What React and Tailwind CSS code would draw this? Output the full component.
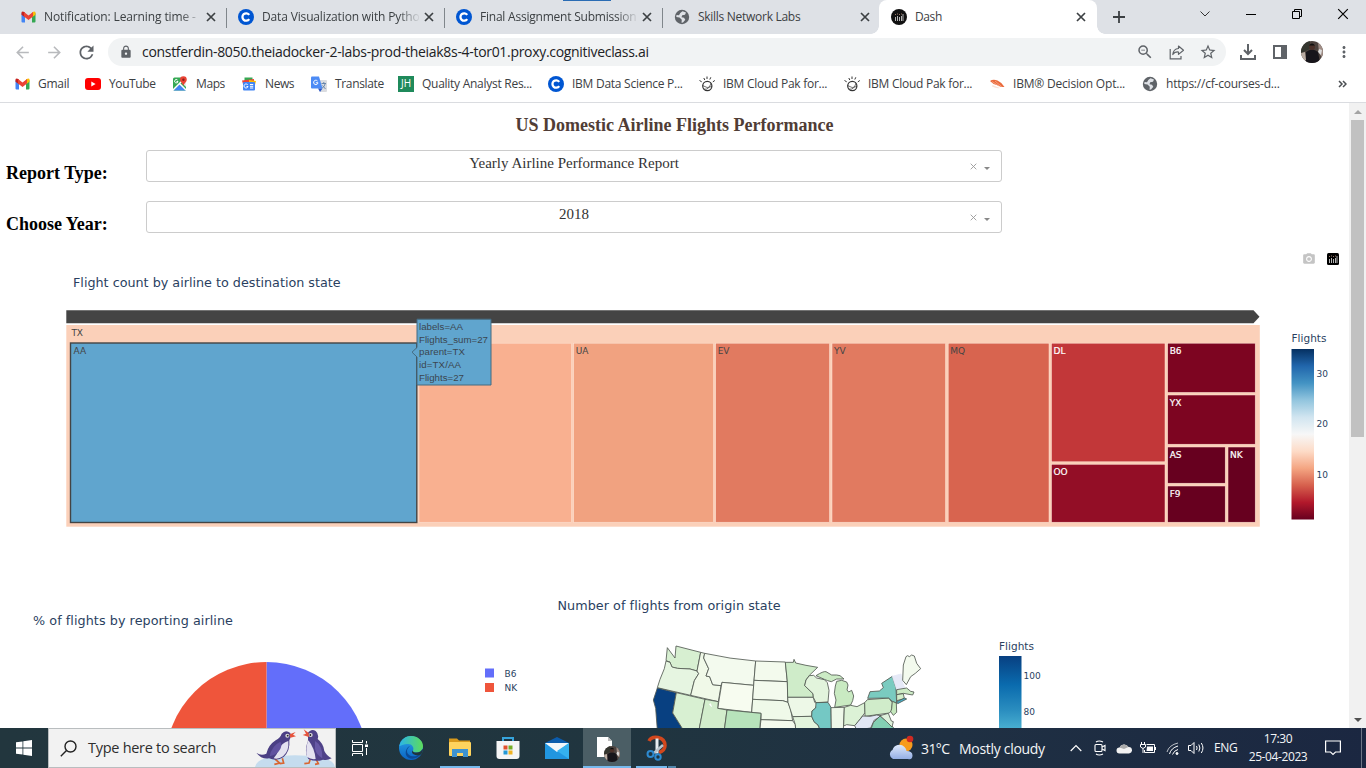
import React from "react";
import { MdArrowBack, MdArrowForward, MdRefresh, MdLock, MdZoomOut, MdStarBorder, MdMoreVert, MdPhotoCamera } from "react-icons/md";

const Gmail = () => (
  <svg width="15" height="12" viewBox="0 0 15 12">
    <path d="M0.5 2v8.500Q0.500 11.500 1.500 11.500H4V5.500z" fill="#4285f4" />
    <path d="M11 5.500v6h2.500q1 0 1-1V2z" fill="#34a853" />
    <path d="M0.500 1.500Q0.500 0.500 2 0.500L4 1.500V6.200L0.500 3.700z" fill="#c5221f" />
    <path d="M14.500 1.500Q14.500 0.500 13 0.500L11 1.500V6.200L14.500 3.700z" fill="#fbbc04" />
    <path d="M3 1L7.500 4.500 12 1V5.500L7.500 9 3 5.500z" fill="#ea4335" />
  </svg>
);

const Coursera = () => (
  <svg width="16" height="16" viewBox="0 0 16 16">
    <circle cx="8" cy="8" r="8" fill="#0056d2" />
    <path d="M11.200 5.900A3.700 3.700 0 1 0 11.200 10.100" fill="none" stroke="#fff" strokeWidth="2.300" />
  </svg>
);

const PlotlyBars = ({ round }) => (
  <svg width="16" height="16" viewBox="0 0 16 16">
    {round ? <circle cx="8" cy="8" r="8" fill="#111" /> : <rect x="2" y="2" width="12" height="12" rx="1.500" fill="#000" />}
    <path d="M4.500 8v4M6.500 7v5M8.500 8v4M10.500 7v5M12 5v7" stroke="#b5b5b5" strokeWidth="1" />
    <path d="M4.500 5v1M6.500 4.500v1M8.500 5v1M10.500 4.500v1" stroke="#976" strokeWidth="1" />
  </svg>
);

const YouTube = () => (
  <svg width="16" height="12" viewBox="0 0 16 12">
    <rect width="16" height="12" rx="3" fill="#f00" />
    <path d="M6.300 3.500v5L10.600 6z" fill="#fff" />
  </svg>
);

const Maps = () => (
  <svg width="16" height="16" viewBox="0 0 16 16">
    <rect x="1" y="1.500" width="13" height="13" rx="1.500" fill="#34a853" />
    <path d="M1.500 14.500L8 7.500l6 7z" fill="#4285f4" />
    <path d="M1 14L11 4M8 8l6 6" stroke="#fff" strokeWidth="1.500" />
    <path d="M9 6l5 5V3H9z" fill="#e8eaed" />
    <path d="M8 3.700a3.300 3.300 0 0 1 6.800 0c0 2.300-2.500 3.300-3.400 6-.9-2.700-3.400-3.700-3.400-6z" fill="#ea4335" />
    <circle cx="11.400" cy="3.700" r="1.200" fill="#8c1d18" />
    <path d="M5.500 4A1.700 1.700 0 1 0 6 5.500H4.500" fill="none" stroke="#fff" />
  </svg>
);

const News = () => (
  <svg width="16" height="16" viewBox="0 0 16 16">
    <path d="M3.500 1.500h8v6h-8z" fill="#34a853" />
    <path d="M1 4.500l12-1.500v5H2z" fill="#ea4335" />
    <path d="M8 4l7 1-1 4H8z" fill="#fbbc04" />
    <rect x="2" y="6" width="12" height="8.500" rx="1" fill="#4285f4" />
    <path d="M6.800 9A2 2 0 1 0 7 10.500H5.500M9 8.500h3.200M9 10.300h3.200M9 12h3.200" fill="none" stroke="#fff" strokeWidth="1" />
  </svg>
);

const Translate = () => (
  <svg width="16" height="16" viewBox="0 0 16 16">
    <path d="M7 4h8q1 0 1 1v10q0 1-1 1H9z" fill="#dadce0" />
    <path d="M1 .5h7L11.500 12.500H1q-1 0-1-1V1.500q0-1 1-1z" fill="#4c8bf5" />
    <path d="M7 12.500h4.500L9 16z" fill="#2a56c6" />
    <path d="M6.500 5A2.200 2.200 0 1 0 7 6.800H4.800" fill="none" stroke="#fff" strokeWidth="1" />
    <path d="M10.500 7.500H15M12.800 6v1.500M14.300 7.500q-.8 3-3 4.500M11.500 9.500l3 3.500" fill="none" stroke="#5f7fa8" strokeWidth=".9" />
  </svg>
);

const Watson = () => (
  <svg width="16" height="16" viewBox="0 0 16 16" fill="none" stroke="#333">
    <circle cx="8.300" cy="10" r="4.600" strokeWidth="1.200" />
    <path d="M3.500 9.500Q8 13 13 10.500M4.800 13Q10 14.500 12 7" strokeWidth=".7" />
    <path d="M4.800 2l1 2M8 .5v2.500M11.800 1.300l-1 2.200M.5 4.500l2.200 1.300M15.800 4.500l-2 1.400" strokeWidth="1" />
  </svg>
);

const Sushi = () => (
  <svg width="16" height="16" viewBox="0 0 16 16">
    <path d="M1 5Q4 3 8.500 4.500 13 6.500 15.500 11 12 11.500 9 9.500 4 8.500 1 5z" fill="#ea6a3b" />
    <path d="M3.500 9Q7 10.500 11 12 8 13 3 10.500z" fill="#f9e3d8" />
    <path d="M3 5.500l7 4.500M6 5l6.500 5.500" stroke="#f9b396" strokeWidth=".7" />
  </svg>
);

const GlobeIcon = () => (
  <svg width="16" height="16" viewBox="0 0 16 16">
    <circle cx="8" cy="8" r="7.200" fill="#5f6368" />
    <path d="M8.500 2.200L12 3.500l-1 2.300-2.800.4-.7 2 2.500.5 1.300 2-2.300 2.800-1.500.3.300-3L5.500 8.500 2.300 8 2.500 6 5 6.300 6.300 4z" fill="#dee1e6" />
  </svg>
);

const X = ({ s = 10, w = 1.7, c = "#3c4043" }) => (
  <svg width={s} height={s} viewBox="0 0 10 10"><path d="M1 1L9 9M9 1L1 9" stroke={c} strokeWidth={w} /></svg>
);

const Avatar = ({ size }) => (
  <svg width={size} height={size} viewBox="0 0 22 22">
    <defs><clipPath id={"av" + size}><circle cx="11" cy="11" r="11" /></clipPath></defs>
    <g clipPath={"url(#av" + size + ")"}>
      <rect width="22" height="22" fill="#4c423e" />
      <path d="M0 0h9v8L0 12z" fill="#34362f" />
      <path d="M17 1l5 3v14l-4-6z" fill="#a08d86" />
      <path d="M18 8l3 1-1 5-3-3z" fill="#ddd" />
      <path d="M0 12l4-1 1 8H0z" fill="#b9aca2" />
      <path d="M5 11q6-5 12 0l2 11H5z" fill="#17151b" />
      <circle cx="11" cy="6" r="3" fill="#4b3029" />
      <path d="M8 4.500q3-4 6 0z" fill="#111" />
    </g>
  </svg>
);

const TABS = [
  { icon: <Gmail />, title: "Notification: Learning time -", track: "tracking-[-0.12px]", fade: true },
  { icon: <Coursera />, title: "Data Visualization with Pytho", track: "tracking-[-0.15px]", fade: true },
  { icon: <Coursera />, title: "Final Assignment Submission", track: "tracking-[-0.22px]", fade: true },
  { icon: <GlobeIcon />, title: "Skills Network Labs", track: "tracking-[-0.28px]" },
];

const BOOKMARKS = [
  ["w-[71px]", <Gmail />, "Gmail", "tracking-[-0.25px]"],
  ["w-[87px]", <YouTube />, "YouTube", "tracking-[-0.4px]"],
  ["w-[69px]", <Maps />, "Maps", "tracking-[-0.4px]"],
  ["w-[70px]", <News />, "News", "tracking-[-0.4px]"],
  ["w-[87px]", <Translate />, "Translate", "tracking-[-0.35px]"],
  ["w-[150px]", <span className="flex size-4 items-center justify-center bg-[#1f8a5b] text-[10px] text-white">JH</span>, "Quality Analyst Res...", "tracking-[-0.27px]"],
  ["w-[151px]", <Coursera />, "IBM Data Science P...", "tracking-[-0.26px]"],
  ["w-[145px]", <Watson />, "IBM Cloud Pak for...", "tracking-[-0.27px]"],
  ["w-[145px]", <Watson />, "IBM Cloud Pak for...", "tracking-[-0.27px]"],
  ["w-[153px]", <Sushi />, "IBM® Decision Opt...", "tracking-[-0.2px]"],
  ["w-[150px]", <GlobeIcon />, "https://cf-courses-d...", "tracking-[-0.22px]"],
];

function Browser() {
  return (
    <header className="shrink-0 font-['Open_Sans',sans-serif] text-[#3c4043]">
      <div className="relative flex h-[34px] bg-[#dee1e6] pl-2">
        <div className="absolute left-[563px] top-0 h-px w-12 bg-[#2a6cb4]" />
        {TABS.map((t, i) => (
          <div key={i} className="relative flex w-[218px] items-center pl-3 pr-[10px]">
            <span className="flex w-4 shrink-0 justify-center">{t.icon}</span>
            <span className={"ml-2 w-[162px] shrink-0 whitespace-nowrap text-[12px] " + t.track + (t.fade ? " [mask-image:linear-gradient(to_right,#000_84%,transparent_98%)]" : "")}>{t.title}</span>
            <span className="ml-auto flex"><X /></span>
            {i < 3 && <span className="absolute -right-px top-2 h-5 w-px bg-[#80868b]" />}
          </div>
        ))}
        <div className="relative -ml-px flex w-[218px] items-center rounded-t-lg bg-white pl-3 pr-[11px]">
          <span className="absolute -left-2 bottom-0 size-2 bg-[radial-gradient(circle_at_0_0,#dee1e6_7.5px,#fff_8px)]" />
          <span className="absolute -right-2 bottom-0 size-2 bg-[radial-gradient(circle_at_100%_0,#dee1e6_7.5px,#fff_8px)]" />
          <PlotlyBars round />
          <span className="ml-2 text-[12px] tracking-[-0.4px]">Dash</span>
          <span className="ml-auto flex"><X /></span>
        </div>
        <svg className="ml-[16px] self-center" width="12" height="12" viewBox="0 0 12 12"><path d="M6 0v12M0 6h12" stroke="#3c4043" strokeWidth="1.800" /></svg>
        <div className="ml-auto flex h-7 text-black">
          <span className="flex w-[46px] items-center justify-center"><svg width="10" height="6" viewBox="0 0 10 6"><path d="M.5.5L5 5 9.500.5" fill="none" stroke="#333" /></svg></span>
          <span className="flex w-[46px] items-center justify-center"><span className="mt-px h-px w-[10px] bg-black" /></span>
          <span className="flex w-[46px] items-center justify-center"><svg width="10" height="10" viewBox="0 0 10 10" fill="none" stroke="#000"><path d="M.5 2.500h7v7h-7zM2.500 2.500v-2h7v7h-2" /></svg></span>
          <span className="flex w-[46px] items-center justify-center"><X w={1} c="#000" s={12} /></span>
        </div>
      </div>

      <div className="flex h-9 items-center bg-white pl-[13px] pr-[13px] text-[#5f6368]">
        <MdArrowBack className="size-[19px] text-[#b8babd]" />
        <MdArrowForward className="ml-[13px] size-[19px] text-[#b8babd]" />
        <MdRefresh className="ml-[12px] size-[21px]" />
        <div className="ml-[11px] flex h-7 w-[1118px] items-center rounded-full bg-[#f1f3f4] pl-[11px] pr-[9px]">
          <MdLock className="size-[14px]" />
          <span className="mb-px ml-[9px] whitespace-nowrap text-[14px] tracking-[-0.31px] text-[#202124]">constferdin-8050.theiadocker-2-labs-prod-theiak8s-4-tor01.proxy.cognitiveclass.ai</span>
          <MdZoomOut className="ml-auto size-[18px]" />
          <svg className="ml-[15px]" width="16" height="16" viewBox="0 0 16 16" fill="none" stroke="#5f6368" strokeWidth="1.200">
            <path d="M1.200 5v9.800h10.800V12" />
            <path d="M9.500 2l5 4.200-5 4.200V8Q5.500 7.700 3.800 10.500 4.300 5 9.500 4.500z" strokeLinejoin="round" />
          </svg>
          <MdStarBorder className="ml-[14px] size-[18px]" />
        </div>
        <svg className="ml-[14px]" width="16" height="16" viewBox="0 0 16 16" fill="none" stroke="#5f6368" strokeWidth="2"><path d="M8 0v9.500M4 6l4 4 4-4M1 11v4h14v-4" /></svg>
        <svg className="ml-[17px]" width="14" height="14" viewBox="0 0 14 14"><path d="M1 1h12v12H1z" fill="none" stroke="#5f6368" strokeWidth="2" /><path d="M8 1h5v12H8z" fill="#5f6368" /></svg>
        <span className="ml-[14px]"><Avatar size={22} /></span>
        <MdMoreVert className="ml-3 size-[18px] shrink-0" />
      </div>

      <nav className="flex h-[33px] items-center border-b border-[#dadce0] bg-white pb-[5px] pl-[14px] text-[12px]">
        {BOOKMARKS.map(([w, icon, label, track], i) => (
          <div key={i} className={"flex shrink-0 items-center whitespace-nowrap " + w}>
            <span className="flex w-4 shrink-0 justify-center">{icon}</span>
            <span className={"ml-2 " + track}>{label}</span>
          </div>
        ))}
        <svg className="ml-[46px]" width="9" height="8" viewBox="0 0 9 8" fill="none" stroke="#4a4e52" strokeWidth="1.500"><path d="M1 1l3 3-3 3M5 1l3 3-3 3" /></svg>
      </nav>
    </header>
  );
}

const Field = ({ label, value }) => (
  <div className="flex h-8 pl-[6px]">
    <label className="w-[140px] pt-[11px] text-[18px] font-bold leading-6 text-black">{label}</label>
    <div className="flex w-[856px] rounded-[3px] border border-[#ccc] bg-white text-[#333]">
      <span className="w-6" />
      <span className="flex-1 pl-[7px] text-center text-[15px] leading-[25px]">{value}</span>
      <span className="flex w-[31px] items-center">
        <X s={7} w={1.3} c="#999" />
        <svg className="ml-[7px] mt-[5px]" width="6" height="3" viewBox="0 0 6 3"><path d="M0 0h6L3 3z" fill="#888" /></svg>
      </span>
    </div>
  </div>
);

const TILES = [
  ["", 419, 343.2, 152.5, 179, "#f9b090", "#444"],
  ["UA", 573.7, 343.2, 139.8, 179, "#f1a280", "#444"],
  ["EV", 715.7, 343.2, 113.800, 179, "#e17a60", "#444"],
  ["YV", 832, 343.2, 113.5, 179, "#e17a60", "#444"],
  ["MQ", 948.2, 343.2, 100.800, 179, "#d8644f", "#444"],
  ["DL", 1051.500, 343.2, 113.500, 118.600, "#c23739", "#fff"],
  ["OO", 1051.500, 464.300, 113.500, 57.900, "#930e26", "#fff"],
  ["B6", 1167.700, 343.2, 87.500, 49.200, "#7d0521", "#fff"],
  ["YX", 1167.700, 395, 87.500, 49.200, "#7d0521", "#fff"],
  ["AS", 1167.700, 447, 57.500, 36.200, "#67001f", "#fff"],
  ["F9", 1167.700, 486, 57.500, 36.200, "#67001f", "#fff"],
  ["NK", 1228, 447, 27.200, 75.200, "#67001f", "#fff"],
];

const HOVER = [["labels=AA", 330, 44], ["Flights_sum=27", 342.7, 69], ["parent=TX", 355.300, 46], ["id=TX/AA", 368, 42], ["Flights=27", 380.700, 45]];

function Treemap() {
  return (
    <section className="font-['DejaVu_Sans',sans-serif]">
      <div className="flex h-[34px] items-end justify-end gap-[9px] pr-[8px]">
        <MdPhotoCamera className="mb-px size-[14px] text-[#c4c4c4]" />
        <PlotlyBars />
      </div>
      <h2 className="h-[37px] pl-[73px] pt-2 text-[12.75px] leading-4 text-[#2a3f5f]">Flight count by airline to destination state</h2>
      <svg className="block" width="1349" height="284" viewBox="0 304 1349 284" fontSize="9">
        <defs>
          <linearGradient id="rdbu" x1="0" y1="0" x2="0" y2="1">
            <stop offset="0" stopColor="#053061" /><stop offset=".1" stopColor="#2166ac" /><stop offset=".2" stopColor="#4393c3" />
            <stop offset=".3" stopColor="#92c5de" /><stop offset=".4" stopColor="#d1e5f0" /><stop offset=".5" stopColor="#f7f7f7" />
            <stop offset=".6" stopColor="#fddbc7" /><stop offset=".7" stopColor="#f4a582" /><stop offset=".8" stopColor="#d6604d" />
            <stop offset=".9" stopColor="#b2182b" /><stop offset="1" stopColor="#67001f" />
          </linearGradient>
        </defs>
        <path d="M66.300 310.200H1253.500L1259.500 316.700 1253.500 323.200H66.300z" fill="#444" />
        <rect x="66.300" y="325" width="1193.500" height="201.700" fill="#fbd0b9" />
        <text x="71.500" y="336" fill="#444" textLength="11.500">TX</text>
        {TILES.map(([l, x, y, w, h, f, c]) => (
          <g key={x + "-" + y}>
            <rect x={x} y={y} width={w} height={h} fill={f} stroke="#fde3d6" strokeWidth=".5" />
            <text x={x + 2} y={y + 10.800} fill={c} stroke={c === "#fff" ? c : "none"} strokeWidth=".2">{l}</text>
          </g>
        ))}
        <rect x="70.500" y="343" width="346.300" height="179.500" fill="#60a5ce" stroke="#444" strokeWidth="1.400" />
        <text x="73.500" y="354" fill="#444">AA</text>
        <path d="M412 352.200L417 347.500V319.200H491V385H417V357z" fill="#60a5ce" stroke="#446a80" strokeWidth="1" />
        <g fill="#3b4650" fontSize="9.700" fontFamily="Liberation Sans">
          {HOVER.map(([t, y, w]) => <text key={t} x="419" y={y} textLength={w}>{t}</text>)}
        </g>
        <g fill="#2a3f5f">
          <text x="1291.500" y="342" fontSize="10.500" textLength="35">Flights</text>
          <rect x="1291.500" y="349" width="22.500" height="170.500" fill="url(#rdbu)" />
          <text x="1316.500" y="376.800">30</text>
          <text x="1316.500" y="427">20</text>
          <text x="1316.500" y="478">10</text>
        </g>
      </svg>
    </section>
  );
}

function Pie() {
  return (
    <section className="w-[545px] pt-[25px] font-['DejaVu_Sans',sans-serif]">
      <h2 className="pl-[33px] text-[12.75px] leading-4 tracking-[0.06px] text-[#2a3f5f]">% of flights by reporting airline</h2>
      <svg className="block" width="545" height="99" viewBox="0 629 545 99" fontSize="9" fill="#2a3f5f">
        <path d="M266.500 763.500V662A101.500 101.500 0 0 1 368 763.500z" fill="#636efa" />
        <path d="M266.500 763.500V662A101.500 101.500 0 0 0 165 763.500z" fill="#ef553b" />
        <rect x="485" y="668.500" width="9" height="9" fill="#636efa" />
        <rect x="485" y="683" width="9" height="9" fill="#ef553b" />
        <text x="504.500" y="677">B6</text>
        <text x="504.500" y="691">NK</text>
      </svg>
    </section>
  );
}

const STATES = [
  ["M82 53L105 84 108 48 182 67 171 123 150 117 112 115 95 111 90 96 78 92z", "#d7efd1"],
  ["M78 93L90 97 96 111 112 115 150 117 171 123 176 131 163 152 152 196 52 173 60 148 73 116z", "#e6f5e1"],
  ["M182 67L194 70 191 84 206 116 198 138 209 140 218 164 243 167 235 215 152 196 163 152 176 131 171 123z", "#f0f9e8"],
  ["M194 70Q270 87 347 93L341 166 246 157 243 167 218 164 209 140 198 138 206 116 191 84z", "#f3faee"],
  ["M246 157L341 166 335 247 233 235z", "#f7fcf0"],
  ["M347 93L436 96 442 155 342 151z", "#f3faed"],
  ["M342 151L442 155 443 201 444 217 428 212 338 208z", "#f3faed"],
  ["M338 208L428 212 444 217 452 238 458 272 363 269 363 250 335 247z", "#eff9e9"],
  ["M363 269L458 272 466 284 467 300 359 300z", "#f3faed"],
  ["M436 97L460 97 462 88 467 99 498 106 533 112 508 136 498 150 494 167 519 191 520 202 443 202 442 155z", "#cfecc9"],
  ["M443 202L520 202 524 217 532 221 527 234 516 243 515 259 458 260 444 217z", "#edf8e7"],
  ["M458 260L515 259 522 275 534 285 540 300 467 300 466 284z", "#e2f4dc"],
  ["M498 150L508 137 521 136 530 144 553 149 562 158 567 181 564 216 528 218 520 202 519 191 494 167z", "#e2f4dc"],
  ["M528 137Q550 123 558 125L575 135 590 135 600 137 612 147 590 147 574 155 563 152 553 148z", "#ccebc5"],
  ["M590 154L605 151 620 156 624 165 621 180 626 186 635 181 641 198 638 212 632 225 584 232 588 210 583 190 586 168z", "#c9eac2"],
  ["M528 218L564 217 573 232 574 300 541 300 534 285 522 275 515 259 516 243 527 234z", "#74c8c4"],
  ["M573 233L613 232 610 300 574 300z", "#eef8e9"],
  ["M613 232L632 226 651 230 674 218 675 248 655 274 644 287 620 284 611 288z", "#dcf2d6"],
  ["M674 218L682 209 746 204 757 218 755 241 748 249 675 259z", "#d0ecca"],
  ["M683 205L690 185 718 183 730 173 725 160 757 139 768 174 770 220 757 214 746 204z", "#7acbc0"],
  ["M757 139L783 132 789 160 795 175 770 178z", "#e6e9f7"],
  ["M788 151L790 105 798 80 803 77 808 80 815 75 823 78 830 100 842 116 826 130 812 140 799 164z", "#f3faee"],
  ["M770 179L800 174 812 184 822 186 818 195 790 190 770 194z", "#cdebc6"],
  ["M770 194L790 191 793 206 770 212z", "#d2eecb"],
  ["M770 215L794 204 800 207 773 221z", "#46aec9"],
  ["M757 214L769 219 770 247 760 256 752 245 755 236z", "#c5e8bd"],
  ["M655 274L668 258 690 259 710 255 725 258 703 270 692 294 650 300 644 287z", "#e1e7f5"],
  ["M692 300L700 278 720 258 735 270 760 292 760 300z", "#83cfb3"],
  ["M720 257L745 250 754 273 760 275 756 291 740 275z", "#dff2dc"],
  ["M52 174L109 188 98 249 130 300 52 300 47 235 40 210z", "#084081"],
  ["M109 188L195 208 177 300 130 300 98 249z", "#d8f0d2"],
  ["M195 208L235 215 233 235 261 240 253 300 177 300z", "#d2edcc"],
  ["M261 240L363 250 359 300 253 300z", "#b7e3bb"],
];

function MapFigure() {
  return (
    <section className="flex-1 pt-[10px] font-['DejaVu_Sans',sans-serif] text-[#2a3f5f]">
      <h2 className="pl-[12.5px] text-[12.75px] leading-4 tracking-[0.05px]">Number of flights from origin state</h2>
      <div className="flex pl-[95px]">
        <svg className="mt-4 block" width="290" height="98" viewBox="0 0 870 294">
          <g stroke="#505850" strokeWidth="2.500" strokeLinejoin="round">
            {STATES.map(([d, f]) => <path key={d} d={d} fill={f} stroke={f === "#e6e9f7" ? "#e6e9f7" : undefined} />)}
          </g>
          <path d="M207 222l5-2 5 12-6-4z" fill="#fff" />
        </svg>
        <svg className="ml-[69px] block" width="70" height="114" viewBox="999 614 70 114" fontSize="9" fill="#2a3f5f">
          <defs>
            <linearGradient id="gnbu" x1="0" y1="0" x2="0" y2="1">
              <stop offset="0" stopColor="#084081" /><stop offset=".4" stopColor="#0a6bae" /><stop offset=".75" stopColor="#2a8dbf" /><stop offset="1" stopColor="#48aed0" />
            </linearGradient>
          </defs>
          <text x="999" y="650" fontSize="10.500" textLength="35">Flights</text>
          <rect x="999" y="656" width="22.500" height="72" fill="url(#gnbu)" />
          <text x="1023.500" y="679">100</text>
          <text x="1023.500" y="715">80</text>
        </svg>
      </div>
    </section>
  );
}

const Penguins = () => (
  <svg width="80" height="38" viewBox="0 0 240 114">
    <path d="M0 114Q5 90 50 84 120 74 190 84 238 92 240 114z" fill="#c5dcee" />
    <path d="M60 90l14 12-16 4M82 88l4 14-12 2" fill="none" stroke="#d86631" strokeWidth="5" />
    <path d="M4 71Q18 82 34 74 40 48 62 34 76 26 80 14 92 0 106 12 110 22 103 34 106 66 86 84 66 98 42 88 20 92 4 71z" fill="#4b3f84" />
    <path d="M100 36Q103 66 84 82 70 92 56 88 66 78 72 60 80 42 100 36z" fill="#e4e2f0" />
    <path d="M76 38Q50 50 44 82 66 78 76 60 82 46 76 38z" fill="#6152a0" />
    <path d="M104 16L122 9 114 17 123 22 106 26z" fill="#e6533c" />
    <circle cx="97" cy="20" r="6" fill="#ddd" /><circle cx="98" cy="20" r="2.800" fill="#222" />
    <path d="M166 90l-4 12-14 2M184 92l6 12-10 2" fill="none" stroke="#d86631" strokeWidth="5" />
    <path d="M157 14Q168-2 182 6 193 16 188 30 206 44 208 66 216 82 230 88 216 96 204 92 182 100 160 90 148 70 156 44 162 34 157 14z" fill="#4f4288" />
    <path d="M160 34Q150 58 156 84 168 92 182 90 178 56 160 34z" fill="#e4e2f0" />
    <path d="M180 36Q204 50 202 88 184 78 180 60z" fill="#6859a6" />
    <path d="M162 24L143 18 153 14 146 1 161 12z" fill="#e6533c" />
    <circle cx="167" cy="18" r="6" fill="#ddd" /><circle cx="166" cy="18" r="2.800" fill="#222" />
  </svg>
);

const Edge = () => (
  <svg width="24" height="24" viewBox="0 0 24 24">
    <defs>
      <linearGradient id="eg" x1="0" x2="1"><stop offset="0" stopColor="#2bb5e8" /><stop offset="1" stopColor="#5ddc5b" /></linearGradient>
      <linearGradient id="eb" x1="0" y1="0" x2="0" y2="1"><stop offset="0" stopColor="#2aa7e8" /><stop offset="1" stopColor="#0a63c4" /></linearGradient>
    </defs>
    <circle cx="12" cy="12" r="12" fill="url(#eb)" />
    <path d="M.3 10C2 3 7 0 12 0c7 0 12 5 12 10 0 4-3 6.500-6.500 6.500-3 0-4-1-3.500-2 1.500-3-1-6.500-5-6.500C4.500 8 1.500 10 .3 10z" fill="url(#eg)" />
    <path d="M8 15c0 5 7 7.500 14 3-4 6-13 6-15 1-1-4 1-8 4-9-2 2-3 3-3 5z" fill="#0c4a96" />
    <path d="M14 14.500q-.5 2 3.500 2 4 0 6-3.500l.5 1q-.5 3-2 4.500-4 2-8-.5-2-2 0-3.500z" fill="#20353e" />
  </svg>
);
const Folder = () => (
  <svg width="24" height="22" viewBox="0 0 24 22">
    <path d="M1 3V1.500h8l2 2h11V7H1z" fill="#d99a1c" /><rect x="1" y="5" width="22" height="14" rx="1" fill="#ffd45e" />
    <path d="M4 12h16v8h-5v-4H9v4H4z" fill="#3f93cf" />
  </svg>
);
const Store = () => (
  <svg width="24" height="24" viewBox="0 0 24 24">
    <path d="M7 6V2h10v4" fill="none" stroke="#36a4dc" strokeWidth="2" /><path d="M.5 5h23v15q0 3-3 3H3.500q-3 0-3-3z" fill="#f5f5f5" />
    <path d="M7.500 9.500h4v4h-4z" fill="#e2502b" /><path d="M12.500 9.500h4v4h-4z" fill="#74ae25" /><path d="M7.500 14.500h4v4h-4z" fill="#2398d6" /><path d="M12.500 14.500h4v4h-4z" fill="#f1b322" />
  </svg>
);
const Mail = () => (
  <svg width="24" height="22" viewBox="0 0 24 22">
    <path d="M0 6L12 0l12 6v2H0z" fill="#0b5cad" /><path d="M0 6h24v16H0z" fill="#2196e0" /><path d="M0 6h24L12 15z" fill="#f2f6fa" /><path d="M12 14L24 6v16z" fill="#35b1ee" />
  </svg>
);
const ChromeWindow = () => (
  <span className="relative flex"><svg width="22" height="24" viewBox="0 0 22 24"><path d="M0 1h11l4 4v16H0z" fill="#fff" /><path d="M11 1v4h4z" fill="#bbb" /></svg><span className="absolute -bottom-[2px] left-[7px]"><Avatar size={16} /></span></span>
);
const Snip = () => (
  <svg width="22" height="26" viewBox="0 0 22 26" fill="none">
    <path d="M3 6Q5 1.500 12 2.500q7 1.500 7 8 0 5-6 7" stroke="#d2471d" strokeWidth="3.500" />
    <path d="M11 3.500v15" stroke="#e7edf1" strokeWidth="3" /><path d="M17 10L8 18" stroke="#b9c4cc" strokeWidth="2.500" />
    <circle cx="4.500" cy="19" r="3" stroke="#2d8ad0" strokeWidth="2" /><circle cx="12" cy="22" r="2.700" stroke="#2d8ad0" strokeWidth="2" />
  </svg>
);

const Weather = () => (
  <svg width="26" height="26" viewBox="0 0 26 26">
    <defs><linearGradient id="wc" x1="0" y1="0" x2="0" y2="1"><stop offset="0" stopColor="#dfe9fb" /><stop offset="1" stopColor="#93aee4" /></linearGradient></defs>
    <circle cx="18" cy="10" r="6.500" fill="#f79b1d" /><circle cx="22" cy="4" r="3.300" fill="#cf2a22" />
    <path d="M5 24a5 5 0 0 1-.5-9 7 7 0 0 1 12-3q2 2 2 4 6 0 6 4.500T20 24z" fill="url(#wc)" />
  </svg>
);

function Taskbar() {
  return (
    <footer className="flex h-10 shrink-0 bg-[linear-gradient(90deg,#22363e_0%,#20353f_45%,#1f3043_70%,#1b2741_100%)] font-['Open_Sans',sans-serif] text-[#f4f6f8]">
      <div className="flex w-12 items-center justify-center">
        <svg width="16" height="16" viewBox="0 0 16 16" fill="#fff"><path d="M0 2.300L6.500 1.400V7.600H0zM7.300 1.300L16 0V7.600H7.300zM0 8.400H6.500V14.600L0 13.700zM7.300 8.400H16V16L7.300 14.700z" /></svg>
      </div>
      <div className="flex w-[288px] items-center border border-[#b9bdbf] bg-[#f2f2f2] pl-[11px] text-[#2e2e2e]">
        <svg width="17" height="17" viewBox="0 0 17 17" fill="none" stroke="#222" strokeWidth="1.400"><circle cx="10.500" cy="6.500" r="5.500" /><path d="M6.500 10.500L.8 16.200" /></svg>
        <span className="ml-[11px] text-[14.5px] tracking-[-0.28px]">Type here to search</span>
        <span className="ml-auto"><Penguins /></span>
      </div>
      <div className="flex w-12 items-center justify-center">
        <svg width="16" height="16" viewBox="0 0 16 16" fill="none" stroke="#fff"><path d="M.5 0v2.500h10V0M.5 16v-2.500h10V16M.5 4.500h10v7H.5zM14.500 1v2.500M14.500 8v7" /><path d="M13 4.500h3v2.500h-3z" fill="#fff" stroke="none" /></svg>
      </div>
      <div className="flex w-[54px] items-center justify-center"><Edge /></div>
      <div className="relative flex w-[43px] items-center justify-center"><Folder /><span className="absolute left-[2px] bottom-0 h-0.5 w-10 bg-[#76b9ed]" /></div>
      <div className="flex w-[54px] items-center justify-center"><Store /></div>
      <div className="flex w-[44px] items-center justify-center"><Mail /></div>
      <div className="relative ml-1 flex w-12 items-center justify-center bg-[#4b5e65]"><span className="ml-[2px]"><ChromeWindow /></span><span className="absolute bottom-0 left-0 h-0.5 w-12 bg-[#76b9ed]" /></div>
      <div className="relative flex w-12 items-center justify-center pl-[3px]"><Snip /><span className="absolute bottom-0 left-[5px] flex h-0.5 w-10"><span className="w-[31px] bg-[#76b9ed]" /><span className="ml-px flex-1 bg-[#5286ab]" /></span></div>
      <div className="ml-auto flex items-center">
        <Weather />
        <span className="ml-[7px] w-[38px] whitespace-nowrap text-[14px] tracking-[-0.6px]">31°C</span>
        <span className="w-[105px] whitespace-nowrap text-[14px] tracking-[-0.3px]">Mostly cloudy</span>
        <div className="flex w-[144px] items-center">
          <span className="flex w-6 justify-center"><svg width="12" height="8" viewBox="0 0 12 8"><path d="M.7 7L6 1.500 11.300 7" fill="none" stroke="#fff" strokeWidth="1.200" /></svg></span>
          <span className="flex w-6 justify-center"><svg width="14" height="16" viewBox="0 0 14 16" fill="none" stroke="#fff" strokeWidth="1.100"><rect x="2" y="4.500" width="7" height="7" rx="1" /><path d="M9 7l3-1.500v5L9 9M3 2q3-2 7 0M3 14q3 2 7 0" /></svg></span>
          <span className="flex w-6 justify-center"><svg width="16" height="11" viewBox="0 0 16 11"><path d="M3.500 10.500a3 3 0 0 1 0-6 5 5 0 0 1 9-.5 3.200 3.200 0 0 1 .5 6.500z" fill="#f2f2f2" /><path d="M3.500 4.500a5 5 0 0 1 9-.5L8 6z" fill="#aaa" /></svg></span>
          <span className="flex w-6 justify-center"><svg width="16" height="12" viewBox="0 0 16 12" fill="none" stroke="#fff"><path d="M6.500 2.500h8v8h-10V8" /><path d="M7 4.500H13v4.500H6.500z" fill="#fff" stroke="none" /><path d="M1.500 0v2M4.500 0v2M.5 2.500h5V5L3 6.500.5 5zM3 6.500V11M15.500 5v3" /></svg></span>
          <span className="flex w-6 justify-center"><svg width="13" height="13" viewBox="0 0 13 13" fill="none" stroke="#fff" strokeWidth="1"><path d="M1 10Q3 3 12 1" opacity=".7" /><path d="M3.500 12Q5 6 12 4M6.500 12.500Q8 8.500 12 7.500" /><circle cx="11" cy="11.500" r="1" fill="#fff" /></svg></span>
          <span className="flex w-6 justify-center"><svg width="17" height="14" viewBox="0 0 17 14" fill="none" stroke="#fff"><path d="M.5 4.500h2.500L6 1.500v11L3 9.500H.5zM8.500 5q1.200 2 0 4M10.800 3.500q2.200 3.500 0 7M13.300 2q3.300 5 0 10" /></svg></span>
        </div>
        <span className="ml-[6px] w-[24px] whitespace-nowrap text-[12px] tracking-[-0.4px]">ENG</span>
        <div className="ml-[8px] w-[64px] whitespace-nowrap text-center text-[12px] leading-[18px] tracking-[-0.4px]"><div>17:30</div><div>25-04-2023</div></div>
        <svg className="ml-[15px]" width="16" height="16" viewBox="0 0 16 16" fill="none" stroke="#fff" strokeWidth="1.200"><path d="M.6 1h14.800v11H10.500L8 14.500 5.500 12H.6z" /></svg>
        <span className="ml-5 mr-1 h-10 w-px bg-[#6d7686]" />
      </div>
    </footer>
  );
}

export default function App() {
  return (
    <div className="flex h-[768px] w-[1366px] flex-col overflow-hidden bg-white">
      <Browser />
      <div className="flex min-h-0 flex-1">
        <main className="flex w-[1349px] flex-col overflow-hidden font-['Liberation_Serif',serif]">
          <h1 className="h-[47px] pt-[10px] text-center text-[18px] font-bold leading-6 text-[#503d36]">US Domestic Airline Flights Performance</h1>
          <div className="flex flex-col gap-[19px]">
            <Field label="Report Type:" value="Yearly Airline Performance Report" />
            <Field label="Choose Year:" value="2018" />
          </div>
          <Treemap />
          <div className="flex">
            <Pie />
            <MapFigure />
          </div>
        </main>
        <aside className="flex w-[17px] flex-col items-center bg-[#f1f1f1]">
          <span className="flex h-[17px] items-center"><svg width="8" height="4" viewBox="0 0 8 4"><path d="M0 4h8L4 0z" fill="#a3a3a3" /></svg></span>
          <span className="h-[317px] w-[13px] bg-[#c1c1c1]" />
          <span className="mt-auto flex h-[17px] items-center"><svg width="8" height="4" viewBox="0 0 8 4"><path d="M0 0h8L4 4z" fill="#505050" /></svg></span>
        </aside>
      </div>
      <Taskbar />
    </div>
  );
}
